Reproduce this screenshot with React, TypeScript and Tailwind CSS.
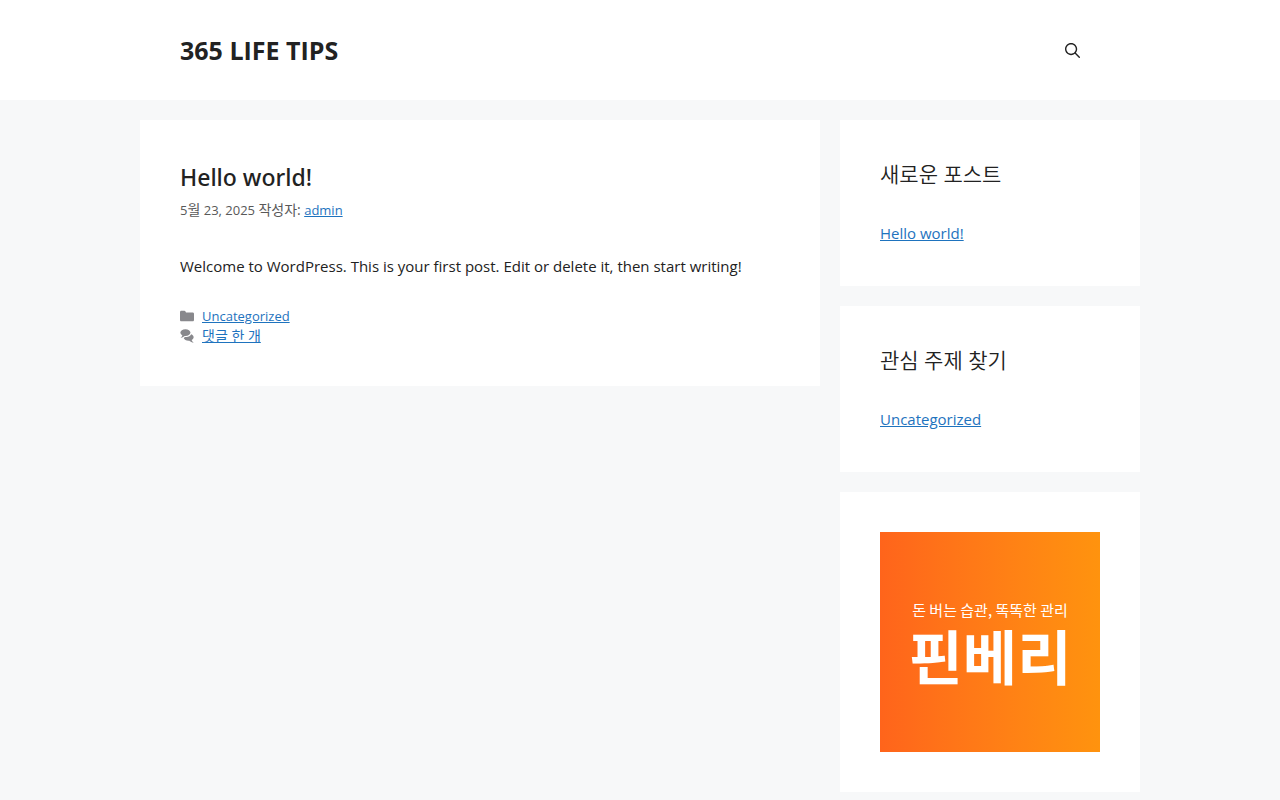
import React from "react";

const SearchIcon: React.FC = () => (
  <svg viewBox="0 0 512 512" className="h-[15px] w-[15px]" fill="currentColor" aria-hidden="true">
    <path
      fillRule="evenodd"
      clipRule="evenodd"
      d="M208 48c-88.366 0-160 71.634-160 160s71.634 160 160 160 160-71.634 160-160S296.366 48 208 48zM0 208C0 93.125 93.125 0 208 0s208 93.125 208 208c0 48.741-16.765 93.566-44.843 129.024l133.826 134.018c9.366 9.379 9.355 24.575-.025 33.941-9.379 9.366-24.575 9.355-33.941-.025L337.238 370.987C301.747 399.167 256.839 416 208 416 93.125 416 0 322.875 0 208z"
    />
  </svg>
);

const FolderIcon: React.FC = () => (
  <svg viewBox="0 0 512 512" className="h-3.5 w-3.5 shrink-0" fill="currentColor" aria-hidden="true">
    <path d="M0 112c0-26.51 21.49-48 48-48h110.014a48 48 0 0143.592 27.907l12.349 26.791A16 16 0 00228.486 128H464c26.51 0 48 21.49 48 48v224c0 26.51-21.49 48-48 48H48c-26.51 0-48-21.49-48-48V112z" />
  </svg>
);

const CommentsIcon: React.FC = () => (
  <svg viewBox="0 0 512 512" className="h-3.5 w-3.5 shrink-0" fill="currentColor" aria-hidden="true">
    <path d="M132.838 329.974a435.298 435.298 0 0016.769-9.004c13.363-7.574 26.587-16.142 37.419-25.507 7.544.597 15.27.925 23.098.925 54.905 0 105.634-15.311 143.285-41.28 23.728-16.365 43.115-37.692 54.155-62.645 54.739 22.205 91.498 63.272 91.498 110.286 0 42.186-29.558 79.498-75.09 102.828 23.46 49.216 75.09 101.709 75.09 101.709s-115.837-38.35-154.424-78.46c-9.956 1.12-20.297 1.758-30.793 1.758-88.727 0-162.927-43.071-181.007-100.61z" />
    <path d="M383.371 132.502c0 70.603-82.961 127.787-185.216 127.787-10.496 0-20.837-.639-30.793-1.757-38.587 40.093-154.424 78.429-154.424 78.429s51.63-52.472 75.09-101.67c-45.532-23.321-75.09-60.619-75.09-102.79C12.938 61.9 95.9 4.716 198.155 4.716 300.41 4.715 383.371 61.9 383.371 132.502z" />
  </svg>
);

const Header: React.FC = () => (
  <header className="bg-white">
    <div className="mx-auto flex max-w-[1000px] items-center justify-between px-10 py-5">
      <p className="text-[25px] font-bold leading-[60px]">
        <a href="#">365 LIFE TIPS</a>
      </p>
      <button type="button" aria-label="검색창 열기" className="flex h-[60px] items-center px-5">
        <SearchIcon />
      </button>
    </div>
  </header>
);

const Post: React.FC = () => (
  <article className="bg-white p-10">
    <h2 className="text-[23px] font-medium leading-[34px] font-['Noto_Sans','Noto_Sans_CJK_KR',sans-serif]">
      <a href="#">Hello world!</a>
    </h2>
    <div className="mt-1.5 text-[13px] leading-5 text-[#595959]">
      5<span className="text-sm leading-5">월</span> 23, 2025{" "}
      <span className="text-sm leading-5">작성자:</span>{" "}
      <a href="#" className="text-[#1e73be] underline">
        admin
      </a>
    </div>
    <p className="mt-[34px] text-[15px] leading-6">
      Welcome to WordPress. This is your first post. Edit or delete it, then
      start writing!
    </p>
    <footer className="mt-7 text-[13px] leading-5 text-[#88888c]">
      <div className="flex items-center gap-2">
        <FolderIcon />
        <a href="#" className="text-[#1e73be] underline">
          Uncategorized
        </a>
      </div>
      <div className="flex items-center gap-2">
        <CommentsIcon />
        <a href="#" className="text-sm leading-5 text-[#1e73be] underline">
          댓글 한 개
        </a>
      </div>
    </footer>
  </article>
);

const widgets = [
  { title: "새로운 포스트", link: "Hello world!" },
  { title: "관심 주제 찾기", link: "Uncategorized" },
];

const Sidebar: React.FC = () => (
  <aside className="w-[300px] shrink-0 space-y-5">
    {widgets.map((widget) => (
      <section key={widget.title} className="bg-white p-10">
        <h2 className="mb-8 text-[21px] font-[350] leading-7">
          {widget.title}
        </h2>
        <ul>
          <li className="text-[15px] leading-[26px]">
            <a href="#" className="text-[#1e73be] underline">
              {widget.link}
            </a>
          </li>
        </ul>
      </section>
    ))}

    {/* Banner */}
    <section className="bg-white p-10">
      <a
        href="#"
        className="flex aspect-square flex-col items-center justify-center bg-linear-to-r from-[#ff641b] to-[#ff930e] pt-1 font-['Noto_Sans_CJK_KR',sans-serif] text-white"
      >
        <span className="text-[15px] leading-[22px]">돈 버는 습관, 똑똑한 관리</span>
        <span className="text-[59px] font-bold leading-[68px]">핀베리</span>
      </a>
    </section>
  </aside>
);

const App: React.FC = () => {
  return (
    <div className="min-h-screen bg-[#f7f8f9] font-['Open_Sans','Noto_Sans_CJK_KR',sans-serif] text-[#222222]">
      <Header />
      <div className="mx-auto flex max-w-[1000px] items-start gap-5 py-5">
        <main className="min-w-0 flex-1">
          <Post />
        </main>
        <Sidebar />
      </div>
    </div>
  );
};

export default App;
